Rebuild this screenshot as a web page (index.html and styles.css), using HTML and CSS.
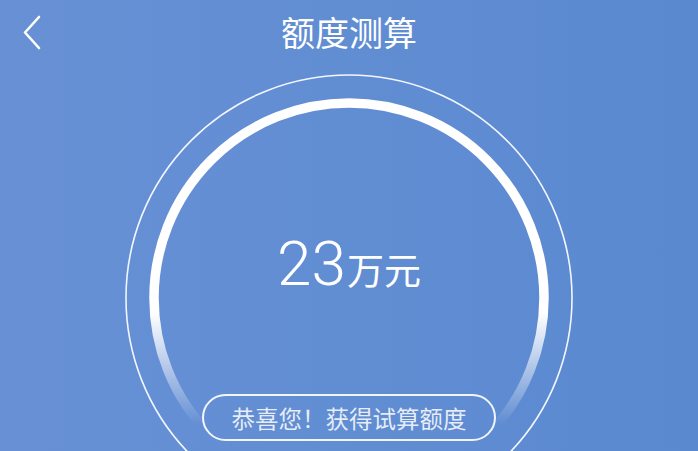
FILE: index.html
```html
<!DOCTYPE html>
<html lang="zh">
<head>
<meta charset="utf-8">
<link rel="stylesheet" href="styles.css">
</head>
<body>
<div class="page">
  <header class="header">
    <div class="back">
      <svg width="24" height="36" viewBox="0 0 24 36"><polyline points="18,3 4,18.5 18,34" fill="none" stroke="#fff" stroke-width="2.6" stroke-linecap="round" stroke-linejoin="round"/></svg>
    </div>
    <h1 class="title">额度测算</h1>
    <div class="spacer"></div>
  </header>
  <main class="gauge">
    <svg class="ring" width="450" height="450" viewBox="0 0 450 450">
      <defs>
        <linearGradient id="fade" gradientUnits="userSpaceOnUse" x1="0" y1="0" x2="0" y2="450">
          <stop offset="0" stop-color="#fff" stop-opacity="1"/>
          <stop offset="0.53" stop-color="#fff" stop-opacity="1"/>
          <stop offset="0.78" stop-color="#fff" stop-opacity="0"/>
        </linearGradient>
      </defs>
      <circle cx="225" cy="224" r="223" fill="none" stroke="#f2f6ff" stroke-width="1.6"/>
      <circle cx="225" cy="224" r="195" fill="none" stroke="url(#fade)" stroke-width="9.5"/>
    </svg>
    <div class="amount"><span class="num">23</span><span class="unit">万元</span></div>
    <div class="pill">恭喜您！获得试算额度</div>
  </main>
</div>
</body>
</html>
```
FILE: styles.css
```css
html, body {
  margin: 0;
  padding: 0;
}
body {
  width: 698px;
  height: 451px;
  overflow: hidden;
  font-family: "Noto Sans CJK SC", "Noto Sans", sans-serif;
}
.page {
  width: 698px;
  height: 451px;
  overflow: hidden;
  background: linear-gradient(to right, #6891d5, #5a89d0);
  color: #fff;
}
.header {
  height: 62px;
  display: grid;
  grid-template-columns: 60px 1fr 60px;
  align-items: center;
}
.back {
  padding-left: 21px;
  padding-top: 2px;
  display: flex;
  align-items: center;
}
.title {
  margin: 0;
  text-align: center;
  font-size: 34px;
  font-weight: 400;
  line-height: 1;
  padding-top: 1px;
}
.gauge {
  position: relative;
  width: 450px;
  height: 377px;
  margin: 12px auto 0;
  display: flex;
  flex-direction: column;
  align-items: center;
  padding-top: 159px;
  box-sizing: border-box;
}
.ring {
  position: absolute;
  left: 0;
  top: 0;
  overflow: visible;
}
.amount {
  position: relative;
  height: 62px;
  line-height: 62px;
  white-space: nowrap;
}
.num {
  font-family: Roboto, "Liberation Sans", sans-serif;
  font-weight: 300;
  font-size: 62px;
}
.unit {
  font-family: "Noto Sans CJK SC", sans-serif;
  font-weight: 400;
  font-size: 37px;
  margin-left: 1px;
}
.pill {
  position: relative;
  margin-top: 99px;
  width: 294px;
  height: 47px;
  box-sizing: border-box;
  border: 2px solid rgba(255, 255, 255, 0.92);
  border-radius: 24px;
  display: flex;
  align-items: center;
  justify-content: center;
  font-size: 23.5px;
  color: rgba(255, 255, 255, 0.85);
}
```
